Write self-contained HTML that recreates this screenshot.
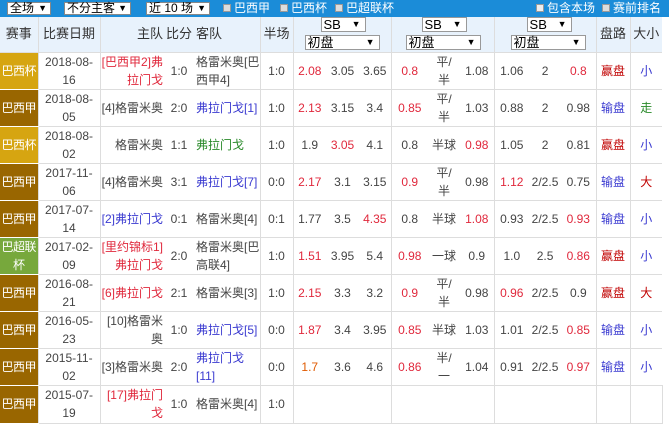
<!DOCTYPE html>
<html><head><meta charset="utf-8"><style>
*{margin:0;padding:0;box-sizing:border-box}
body{width:669px;height:424px;background:#fff;font-family:"Liberation Sans","Noto Sans CJK SC",sans-serif;font-size:12px;color:#444;overflow:hidden;position:relative}
.bar{position:absolute;left:0;top:0;width:669px;height:17px;background:#1b8cd8;color:#fff;font-size:12px;line-height:17px}
.sel{position:absolute;top:2px;height:13px;background:#fff;color:#000;border:1px solid #888;line-height:11px;font-size:12px;padding-left:2px}
.sel b{position:absolute;right:3px;top:0;font-size:9px}
.cb{position:absolute;top:0;white-space:nowrap}
.cb i{display:inline-block;width:8px;height:8px;background:#ddd;border:1px solid #999;margin-right:3px;vertical-align:0}
table{position:absolute;left:0;top:17px;border-collapse:collapse;table-layout:fixed;width:662px}
td{text-align:center;vertical-align:middle;line-height:18px;font-size:12px;height:37px;border-bottom:1px solid #ddd;overflow:hidden}
tr.h td{background:#e8f2fc;height:35px;font-size:13px;color:#333}
.bl{border-left:1px solid #ddd}
.lg{color:#fff;font-size:12px;letter-spacing:-0.5px;white-space:nowrap;border-bottom:1px solid #fff}
.cup{background:#d6a511}.a{background:#996600}.g{background:#77a83c}
.r{color:#e0283c}.bu{color:#3a3ad0}.gr{color:#2a8a2a}.dr{color:#c00000}
.hm{text-align:right;padding-right:2px}.aw{text-align:left;padding-left:3px}
.s{display:inline-block;position:relative;height:15px;border:1px solid #999;background:#fff;text-align:left;line-height:13px;font-size:13px;color:#000;padding-left:2px}
.s b{position:absolute;right:4px;top:0;font-size:9px}
</style></head><body>
<div class="bar">
<span class="sel" style="left:7px;width:44px">全场<b>▼</b></span>
<span class="sel" style="left:64px;width:67px">不分主客<b>▼</b></span>
<span class="sel" style="left:146px;width:64px">近 10 场<b>▼</b></span>
<span class="cb" style="left:223px"><i></i>巴西甲</span>
<span class="cb" style="left:280px"><i></i>巴西杯</span>
<span class="cb" style="left:335px"><i></i>巴超联杯</span>
<span class="cb" style="left:536px"><i style="background:#eee"></i>包含本场</span>
<span class="cb" style="left:602px"><i></i>赛前排名</span>
</div>
<table>
<colgroup><col style="width:38px"><col style="width:62px"><col style="width:65px"><col style="width:28px"><col style="width:67px"><col style="width:33px"><col style="width:33px"><col style="width:33px"><col style="width:32px"><col style="width:37px"><col style="width:32px"><col style="width:34px"><col style="width:35px"><col style="width:32px"><col style="width:35px"><col style="width:34px"><col style="width:32px"></colgroup>
<tr class="h"><td>赛事</td><td class="bl">比赛日期</td><td class="bl hm" colspan="1">主队</td><td>比分</td><td class="aw">客队</td><td class="bl">半场</td>
<td class="bl" colspan="3" style="position:relative"><span class="s" style="width:45px;position:absolute;left:27px;top:0">SB<b>▼</b></span><span class="s" style="width:75px;position:absolute;left:11px;top:18px">初盘<b>▼</b></span></td>
<td class="bl" colspan="3" style="position:relative"><span class="s" style="width:45px;position:absolute;left:30px;top:0">SB<b>▼</b></span><span class="s" style="width:75px;position:absolute;left:14px;top:18px">初盘<b>▼</b></span></td>
<td class="bl" colspan="3" style="position:relative"><span class="s" style="width:45px;position:absolute;left:32px;top:0">SB<b>▼</b></span><span class="s" style="width:75px;position:absolute;left:16px;top:18px">初盘<b>▼</b></span></td>
<td class="bl">盘路</td><td class="bl">大小</td></tr>

<tr><td class="lg cup">巴西杯</td><td class="bl">2018-08-<br>16</td><td class="bl hm r">[巴西甲2]弗<br>拉门戈</td><td>1:0</td><td class="aw">格雷米奥[巴<br>西甲4]</td><td class="bl">1:0</td><td class="bl r">2.08</td><td>3.05</td><td>3.65</td><td class="bl r">0.8</td><td>平/<br>半</td><td>1.08</td><td class="bl">1.06</td><td>2</td><td class="r">0.8</td><td class="bl dr">赢盘</td><td class="bl bu">小</td></tr>

<tr><td class="lg a">巴西甲</td><td class="bl">2018-08-<br>05</td><td class="bl hm">[4]格雷米奥</td><td>2:0</td><td class="aw bu">弗拉门戈[1]</td><td class="bl">1:0</td><td class="bl r">2.13</td><td>3.15</td><td>3.4</td><td class="bl r">0.85</td><td>平/<br>半</td><td>1.03</td><td class="bl">0.88</td><td>2</td><td>0.98</td><td class="bl bu">输盘</td><td class="bl gr">走</td></tr>

<tr><td class="lg cup">巴西杯</td><td class="bl">2018-08-<br>02</td><td class="bl hm">格雷米奥</td><td>1:1</td><td class="aw gr">弗拉门戈</td><td class="bl">1:0</td><td class="bl">1.9</td><td class="r">3.05</td><td>4.1</td><td class="bl">0.8</td><td>半球</td><td class="r">0.98</td><td class="bl">1.05</td><td>2</td><td>0.81</td><td class="bl dr">赢盘</td><td class="bl bu">小</td></tr>

<tr><td class="lg a">巴西甲</td><td class="bl">2017-11-<br>06</td><td class="bl hm">[4]格雷米奥</td><td>3:1</td><td class="aw bu">弗拉门戈[7]</td><td class="bl">0:0</td><td class="bl r">2.17</td><td>3.1</td><td>3.15</td><td class="bl r">0.9</td><td>平/<br>半</td><td>0.98</td><td class="bl r">1.12</td><td>2/2.5</td><td>0.75</td><td class="bl bu">输盘</td><td class="bl dr">大</td></tr>

<tr><td class="lg a">巴西甲</td><td class="bl">2017-07-<br>14</td><td class="bl hm bu">[2]弗拉门戈</td><td>0:1</td><td class="aw">格雷米奥[4]</td><td class="bl">0:1</td><td class="bl">1.77</td><td>3.5</td><td class="r">4.35</td><td class="bl">0.8</td><td>半球</td><td class="r">1.08</td><td class="bl">0.93</td><td>2/2.5</td><td class="r">0.93</td><td class="bl bu">输盘</td><td class="bl bu">小</td></tr>

<tr><td class="lg g">巴超联<br>杯</td><td class="bl">2017-02-<br>09</td><td class="bl hm r">[里约锦标1]<br>弗拉门戈</td><td>2:0</td><td class="aw">格雷米奥[巴<br>高联4]</td><td class="bl">1:0</td><td class="bl r">1.51</td><td>3.95</td><td>5.4</td><td class="bl r">0.98</td><td>一球</td><td>0.9</td><td class="bl">1.0</td><td>2.5</td><td class="r">0.86</td><td class="bl dr">赢盘</td><td class="bl bu">小</td></tr>

<tr><td class="lg a">巴西甲</td><td class="bl">2016-08-<br>21</td><td class="bl hm r">[6]弗拉门戈</td><td>2:1</td><td class="aw">格雷米奥[3]</td><td class="bl">1:0</td><td class="bl r">2.15</td><td>3.3</td><td>3.2</td><td class="bl r">0.9</td><td>平/<br>半</td><td>0.98</td><td class="bl r">0.96</td><td>2/2.5</td><td>0.9</td><td class="bl dr">赢盘</td><td class="bl dr">大</td></tr>

<tr><td class="lg a">巴西甲</td><td class="bl">2016-05-<br>23</td><td class="bl hm">[10]格雷米<br>奥</td><td>1:0</td><td class="aw bu">弗拉门戈[5]</td><td class="bl">0:0</td><td class="bl r">1.87</td><td>3.4</td><td>3.95</td><td class="bl r">0.85</td><td>半球</td><td>1.03</td><td class="bl">1.01</td><td>2/2.5</td><td class="r">0.85</td><td class="bl bu">输盘</td><td class="bl bu">小</td></tr>

<tr><td class="lg a">巴西甲</td><td class="bl">2015-11-<br>02</td><td class="bl hm">[3]格雷米奥</td><td>2:0</td><td class="aw bu">弗拉门戈<br>[11]</td><td class="bl">0:0</td><td class="bl" style="color:#e05a00">1.7</td><td>3.6</td><td>4.6</td><td class="bl r">0.86</td><td>半/<br>一</td><td>1.04</td><td class="bl">0.91</td><td>2/2.5</td><td class="r">0.97</td><td class="bl bu">输盘</td><td class="bl bu">小</td></tr>

<tr><td class="lg a" style="height:38px">巴西甲</td><td class="bl">2015-07-<br>19</td><td class="bl hm r">[17]弗拉门<br>戈</td><td>1:0</td><td class="aw">格雷米奥[4]</td><td class="bl">1:0</td><td class="bl"></td><td></td><td></td><td class="bl"></td><td></td><td></td><td class="bl"></td><td></td><td></td><td class="bl"></td><td class="bl" style="border-right:1px solid #ddd"></td></tr>
</table>
</body></html>
